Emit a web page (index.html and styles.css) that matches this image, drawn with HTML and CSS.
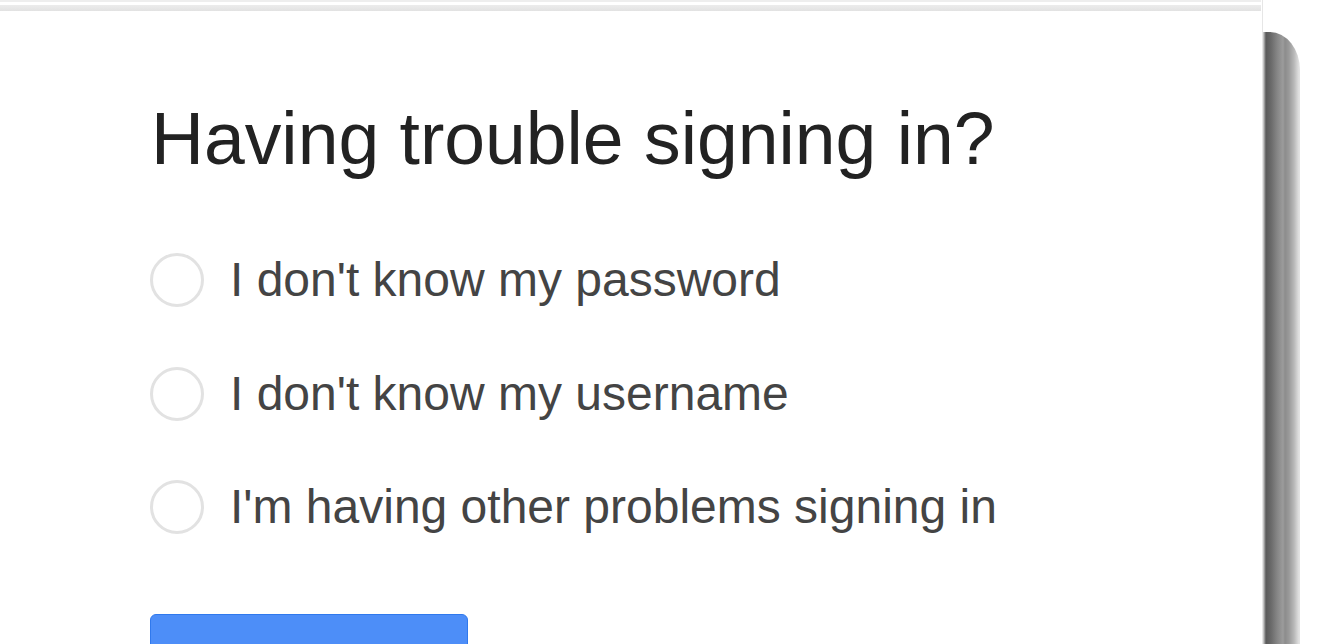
FILE: index.html
```html
<!DOCTYPE html>
<html lang="en">
<head>
  <meta charset="UTF-8" />
  <meta name="viewport" content="width=device-width, initial-scale=1" />
  <title>Having trouble signing in?</title>
  <link rel="stylesheet" href="styles.css">
</head>
<body>
  <div class="page">
    <div class="card">
      <div class="topbar"><div class="band"></div></div>

      <div class="content">
        <h1>Having trouble signing in?</h1>

        <form class="options">
          <label class="option">
            <input type="radio" name="problem" value="password" />
            <span class="circle"></span>
            <span class="label-text">I don't know my password</span>
          </label>
          <label class="option">
            <input type="radio" name="problem" value="username" />
            <span class="circle"></span>
            <span class="label-text">I don't know my username</span>
          </label>
          <label class="option">
            <input type="radio" name="problem" value="other" />
            <span class="circle"></span>
            <span class="label-text">I'm having other problems signing in</span>
          </label>

          <button type="button" class="continue">Continue</button>
        </form>
      </div>
    </div>
    <div class="shadow" aria-hidden="true"></div>
  </div>
</body>
</html>
```

FILE: styles.css
```css
body, html {
  margin: 0;
  padding: 0;
  height: 100%;
  background: #fff;
  font-family: 'Liberation Sans', Arial, sans-serif;
  overflow: hidden;
}

.page {
  display: flex;
  height: 100vh;
}

.card {
  width: 1263px;
  height: 100%;
  background: #fff;
  border-right: 1px solid #e6e6e6;
  box-sizing: border-box;
}

.topbar {
  height: 9px;
  border-top: 2px solid #eeeeee;
  margin-right: 1px;
}

.band {
  margin-top: 3px;
  height: 6px;
  background: linear-gradient(to bottom, #ececec, #e2e2e2);
}

.content {
  padding: 86px 0 0 151px;
}

h1 {
  margin: 0;
  font-size: 73.3px;
  line-height: 84px;
  font-weight: normal;
  color: #222;
}

.options {
  display: flex;
  flex-direction: column;
  align-items: flex-start;
  gap: 57.5px;
  margin-top: 71px;
}

.option {
  display: flex;
  align-items: center;
  gap: 26px;
  height: 56px;
  margin-left: -1px;
  cursor: pointer;
}

.option input {
  display: none;
}

.circle {
  width: 54px;
  height: 54px;
  box-sizing: border-box;
  border: 3px solid #e2e2e2;
  border-radius: 50%;
  background: #fff;
}

.label-text {
  font-size: 48px;
  line-height: 56px;
  color: #444;
}

.continue {
  margin-top: 21.5px;
  margin-left: -1px;
  width: 318px;
  height: 110px;
  border: 1px solid #3079ed;
  border-radius: 6px;
  background: #4d8ef8;
  color: #fff;
  font-family: inherit;
  font-size: 30px;
  font-weight: bold;
  line-height: 108px;
  padding: 0;
}

.shadow {
  width: 37px;
  margin-top: 32px;
  border-top-right-radius: 30px 38px;
  background: linear-gradient(to right,
    #d8d8d8 0,
    #5a5a5a 3px,
    #6a6a6a 8px,
    #858585 14px,
    #9c9c9c 20px,
    #8c8c8c 22px,
    #9a9a9a 26px,
    #b8b8b8 31px,
    #e2e2e2 36px);
}
```
